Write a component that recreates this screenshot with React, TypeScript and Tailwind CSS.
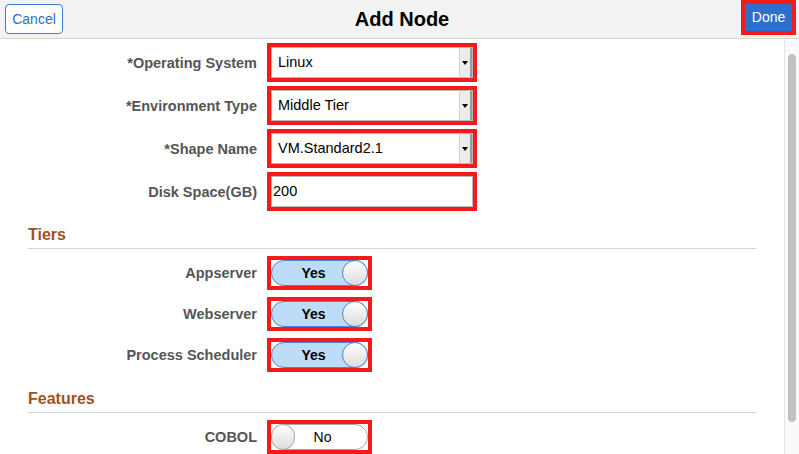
import React from "react";

const font = { fontFamily: '"Liberation Sans", Arial, sans-serif' };

const SelectField = ({ value }: { value: string }) => (
  <div className="border-4 border-[#f21b1b] w-[210px] h-[39px]">
    <div className="flex h-full border border-[#b9b9b9] bg-white">
      <span className="flex-1 flex items-center pl-[6px] text-[14.5px] text-black">{value}</span>
      <span className="w-[13px] flex items-center justify-center bg-[#ececec] border-l border-[#d2d2d2] border-r-2 border-r-[#9a9a9a]">
        <span className="w-0 h-0 border-l-[3px] border-r-[3px] border-t-[4px] border-l-transparent border-r-transparent border-t-black" />
      </span>
    </div>
  </div>
);

const Toggle = ({ on }: { on: boolean }) => (
  <div className="border-4 border-[#f21b1b] w-[105px] h-[34px]">
    {on ? (
      <div className="relative h-full rounded-full border border-[#4a86d4] bg-[#bddcf8] flex items-center">
        <span className="flex-1 text-center pr-[12px] text-[14px] font-bold text-black">Yes</span>
        <span className="absolute right-[-1px] top-[-1px] w-[26px] h-[26px] rounded-full border border-[#4a86d4] bg-gradient-to-b from-white to-[#dcdcdc]" />
      </div>
    ) : (
      <div className="relative h-full rounded-full border border-[#a8a8a8] bg-white flex items-center">
        <span className="flex-1 text-center pl-[6px] text-[14px] text-black">No</span>
        <span className="absolute left-[-1px] top-[-1px] w-[24px] h-[26px] rounded-full border border-[#a8a8a8] bg-gradient-to-b from-white to-[#dcdcdc]" />
      </div>
    )}
  </div>
);

const Row = ({ label, children }: { label: string; children: React.ReactNode }) => (
  <div className="flex items-center">
    <div className="w-[257px] text-right text-[14.5px] font-bold text-[#555555] pt-[2px]">{label}</div>
    <div className="ml-[10px]">{children}</div>
  </div>
);

const Section = ({ title }: { title: string }) => (
  <div className="mx-[28px] border-b border-[#d3d3dc] pb-[4px]">
    <h3 className="text-[16px] leading-[18px] font-bold text-[#a0521b]">{title}</h3>
  </div>
);

export default function App() {
  return (
    <div className="w-[799px] h-[454px] overflow-hidden bg-white flex flex-col" style={font}>
      {/* Header */}
      <div className="h-[39px] shrink-0 bg-[#f3f3f3] border-b border-[#d6d6d6] flex items-center justify-between px-[5px]">
        <button className="w-[58px] h-[30px] rounded-[4px] border border-[#3f7fd2] bg-white text-[14px] text-[#2f6cc4]">
          Cancel
        </button>
        <h1 className="text-[20px] font-bold text-black">Add Node</h1>
        <div className="border-4 border-[#f21b1b] -mr-[2px] mb-[3px]">
          <button className="w-[47px] h-[27px] bg-[#2e6fcd] text-[14px] text-white">Done</button>
        </div>
      </div>

      <div className="flex flex-1 min-h-0">
        {/* Content */}
        <div className="flex-1 flex flex-col pt-[4px]">
          <div className="flex flex-col gap-[4px]">
            <Row label="*Operating System">
              <SelectField value="Linux" />
            </Row>
            <Row label="*Environment Type">
              <SelectField value="Middle Tier" />
            </Row>
            <Row label="*Shape Name">
              <SelectField value="VM.Standard2.1" />
            </Row>
            <Row label="Disk Space(GB)">
              <div className="border-4 border-[#f21b1b] w-[210px] h-[39px]">
                <div className="h-full border border-[#b9b9b9] bg-white flex items-center pl-[1px] text-[14.5px] text-black">200</div>
              </div>
            </Row>
          </div>

          <div className="mt-[15px]">
            <Section title="Tiers" />
          </div>
          <div className="flex flex-col gap-[7px] mt-[7px]">
            <Row label="Appserver">
              <Toggle on />
            </Row>
            <Row label="Webserver">
              <Toggle on />
            </Row>
            <Row label="Process Scheduler">
              <Toggle on />
            </Row>
          </div>

          <div className="mt-[18px]">
            <Section title="Features" />
          </div>
          <div className="mt-[7px]">
            <Row label="COBOL">
              <Toggle on={false} />
            </Row>
          </div>
        </div>

        {/* Scrollbar */}
        <div className="w-[15px] shrink-0 bg-[#fafafa] border-l border-[#e6e6e6] pt-[15px] pb-[32px] flex justify-center">
          <div className="w-[8px] h-full rounded-full bg-[#c1c1c1]" />
        </div>
      </div>
    </div>
  );
}
